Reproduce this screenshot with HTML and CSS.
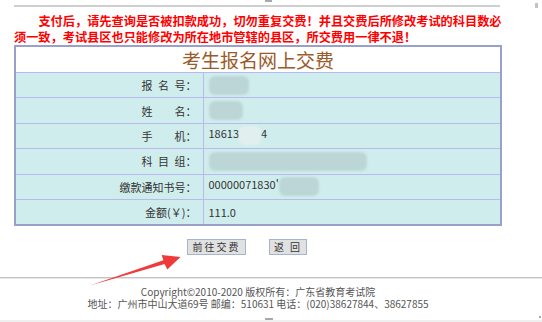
FILE: index.html
```html
<!DOCTYPE html>
<html lang="zh-CN">
  <head>
    <meta charset="UTF-8" />
    <title>考生报名网上交费</title>
    <link rel="stylesheet" href="styles.css">
  </head>

  <body>
    <span class="mark mark-top"></span>
    <span class="mark mark-right"></span>

    <div class="main">
      <div class="topline"></div>

      <p class="notice">支付后，请先查询是否被扣款成功，切勿重复交费！并且交费后所修改考试的科目数必<br>须一致，考试县区也只能修改为所在地市管辖的县区，所交费用一律不退！</p>

      <table class="pay">
        <tr class="title-row">
          <td colspan="2">考生报名网上交费</td>
        </tr>
        <tr>
          <td class="label">报&ensp;名&ensp;号：</td>
          <td class="value"><span class="blur" style="width: 40px"></span></td>
        </tr>
        <tr>
          <td class="label">姓　　名：</td>
          <td class="value"><span class="blur" style="width: 34px"></span></td>
        </tr>
        <tr>
          <td class="label">手　　机：</td>
          <td class="value">18613<span class="blur light" style="width: 22px"></span>4</td>
        </tr>
        <tr>
          <td class="label">科&ensp;目&ensp;组：</td>
          <td class="value"><span class="blur" style="width: 158px"></span></td>
        </tr>
        <tr>
          <td class="label">缴款通知书号：</td>
          <td class="value">00000071830'<span class="blur" style="width: 40px"></span></td>
        </tr>
        <tr>
          <td class="label">金额(￥)：</td>
          <td class="value">111.0</td>
        </tr>
      </table>

      <div class="buttons">
        <button class="btn btn-pay">前往交费</button>
        <button class="btn btn-back">返 回</button>
      </div>
    </div>

    <div class="rule"></div>

    <div class="footer">
      <p>Copyright©2010-2020 版权所有：广东省教育考试院</p>
      <p>地址：广州市中山大道69号 邮编：510631 电话：(020)38627844、38627855</p>
    </div>

    <div class="bottombar">
      <span class="mark mark-bottom"></span>
      <span class="mark mark-corner"></span>
    </div>

    <svg class="arrow" width="542" height="322" viewBox="0 0 542 322">
      <polygon
        points="90,285.5 163.4,260.2 161.7,255 180.5,257 167.3,269.5 164.6,264 90,285.5"
        fill="#f03a3a"
      />
    </svg>
  </body>
</html>
```

FILE: styles.css
```css
* {
  margin: 0;
  padding: 0;
  box-sizing: border-box;
}

body {
  font-family: "Noto Sans CJK SC", "Noto Sans", sans-serif;
  background: #fff;
  color: #333;
  width: 542px;
  height: 322px;
  position: relative;
  overflow: hidden;
}

.main {
  margin-left: 14px;
  width: 488px;
  padding-top: 5px;
}

.topline {
  width: 486px;
  border-top: 2px solid #cfcfcf;
}

.notice {
  margin-top: 7px;
  color: #f00;
  font-size: 12.2px;
  font-weight: bold;
  line-height: 15.5px;
  text-indent: 2em;
  white-space: nowrap;
}

.pay {
  width: 488px;
  border-collapse: collapse;
  border: 2px solid #9aa1c9;
}

.pay td {
  border: 1px solid #b9b9ef;
  background: #d0eded;
  font-size: 11px;
  line-height: 14px;
  height: 25.4px;
  vertical-align: middle;
}

.title-row td {
  background: #fff;
  height: 26.5px;
  line-height: 22px;
  text-align: center;
  font-size: 19px;
  color: #9a5a2a;
}

.label {
  width: 188px;
  text-align: right;
  padding-right: 6px;
}

.value {
  padding-left: 5px;
  white-space: nowrap;
}

.blur {
  display: inline-block;
  height: 19px;
  vertical-align: middle;
  background: #bcd6d6;
  border-radius: 6px;
  filter: blur(1px);
}

.blur.light {
  background: #e2efef;
}

.buttons {
  display: flex;
  gap: 23px;
  margin-top: 13px;
  margin-left: 173px;
}

.btn {
  height: 16px;
  font-family: "Noto Sans CJK SC", sans-serif;
  font-size: 10px;
  line-height: 14px;
  color: #333;
  background: #e1e1e1;
  border: 1px solid #a3b6cc;
  letter-spacing: 2px;
}

.btn-pay {
  width: 59px;
}

.btn-back {
  width: 38px;
}

.rule {
  margin-top: 22px;
  border-top: 1px solid #c4c4c4;
  border-bottom: 1px solid #e6e6e6;
}

.footer {
  margin-left: 14px;
  width: 488px;
  padding-top: 7px;
  text-align: center;
  font-size: 10px;
  line-height: 12.5px;
  color: #555;
}

.footer p {
  height: 12.5px;
}

.bottombar {
  position: absolute;
  left: 0;
  bottom: 0;
  width: 542px;
  height: 2px;
  background: #efefef;
}

.mark {
  position: absolute;
  background: #a8a8a8;
}

.mark-top {
  left: 265px;
  top: 0;
  width: 7px;
  height: 2px;
}

.mark-right {
  left: 535px;
  top: 3px;
  width: 3px;
  height: 5px;
  background: #c4c4c4;
}

.mark-bottom {
  left: 265px;
  top: -2px;
  width: 8px;
  height: 2px;
}

.mark-corner {
  left: 539px;
  top: -4px;
  width: 2px;
  height: 2px;
}

.arrow {
  position: absolute;
  left: 0;
  top: 0;
  pointer-events: none;
}
```
